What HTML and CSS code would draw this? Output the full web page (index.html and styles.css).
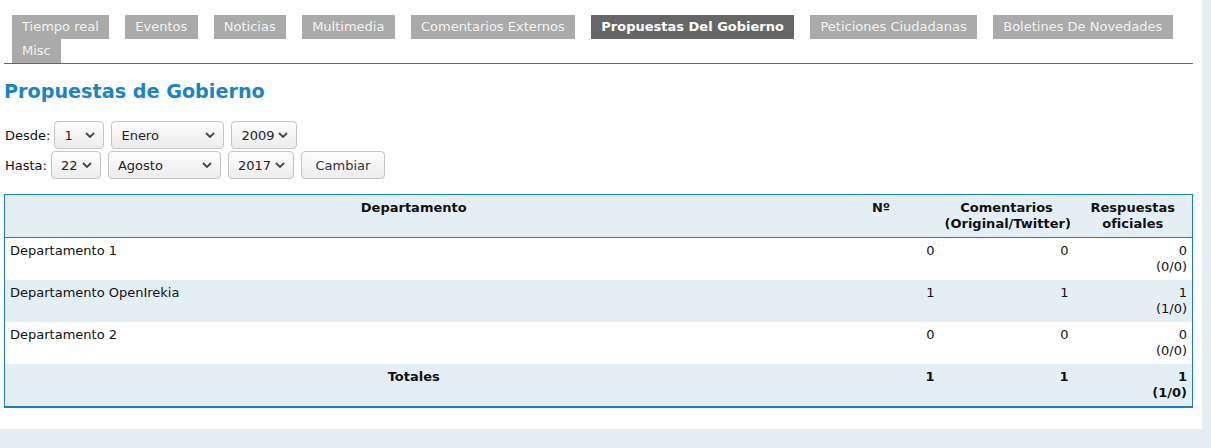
FILE: index.html
```html
<!DOCTYPE html>
<html lang="es">
<head>
<meta charset="utf-8">
<title>Propuestas de Gobierno</title>
<link rel="stylesheet" href="styles.css">
</head>
<body>
<div class="page">
  <ul class="tabs">
    <li class="tab">Tiempo real</li>
    <li class="tab">Eventos</li>
    <li class="tab">Noticias</li>
    <li class="tab">Multimedia</li>
    <li class="tab">Comentarios Externos</li>
    <li class="tab active">Propuestas Del Gobierno</li>
    <li class="tab">Peticiones Ciudadanas</li>
    <li class="tab">Boletines De Novedades</li>
    <li class="tab">Misc</li>
  </ul>

  <h1 class="title">Propuestas de Gobierno</h1>

  <form class="filter">
    <div class="frow">
      <span class="flabel">Desde:</span>
      <span class="sel w-day"><select><option>1</option></select><svg class="chev" width="10" height="6" viewBox="0 0 10 6"><path d="M1 1L5 5L9 1" fill="none" stroke="#444" stroke-width="1.8"/></svg></span>
      <span class="sel w-month"><select><option>Enero</option></select><svg class="chev" width="10" height="6" viewBox="0 0 10 6"><path d="M1 1L5 5L9 1" fill="none" stroke="#444" stroke-width="1.8"/></svg></span>
      <span class="sel w-year"><select><option>2009</option></select><svg class="chev" width="10" height="6" viewBox="0 0 10 6"><path d="M1 1L5 5L9 1" fill="none" stroke="#444" stroke-width="1.8"/></svg></span>
    </div>
    <div class="frow">
      <span class="flabel">Hasta:</span>
      <span class="sel w-day"><select><option>22</option></select><svg class="chev" width="10" height="6" viewBox="0 0 10 6"><path d="M1 1L5 5L9 1" fill="none" stroke="#444" stroke-width="1.8"/></svg></span>
      <span class="sel w-month"><select><option>Agosto</option></select><svg class="chev" width="10" height="6" viewBox="0 0 10 6"><path d="M1 1L5 5L9 1" fill="none" stroke="#444" stroke-width="1.8"/></svg></span>
      <span class="sel w-year"><select><option>2017</option></select><svg class="chev" width="10" height="6" viewBox="0 0 10 6"><path d="M1 1L5 5L9 1" fill="none" stroke="#444" stroke-width="1.8"/></svg></span>
      <button type="button" class="btn">Cambiar</button>
    </div>
  </form>

  <table class="stats">
    <colgroup>
      <col class="c-dept">
      <col class="c-num">
      <col class="c-com">
      <col class="c-resp">
    </colgroup>
    <thead>
      <tr>
        <th>Departamento</th>
        <th>Nº</th>
        <th>Comentarios<br>(Original/Twitter)</th>
        <th>Respuestas<br>oficiales</th>
      </tr>
    </thead>
    <tbody>
      <tr>
        <td>Departamento 1</td>
        <td class="n">0</td>
        <td class="n">0</td>
        <td class="n">0<br>(0/0)</td>
      </tr>
      <tr class="alt">
        <td>Departamento OpenIrekia</td>
        <td class="n">1</td>
        <td class="n">1</td>
        <td class="n">1<br>(1/0)</td>
      </tr>
      <tr>
        <td>Departamento 2</td>
        <td class="n">0</td>
        <td class="n">0</td>
        <td class="n">0<br>(0/0)</td>
      </tr>
      <tr class="alt total">
        <th>Totales</th>
        <td class="n">1</td>
        <td class="n">1</td>
        <td class="n">1<br>(1/0)</td>
      </tr>
    </tbody>
  </table>
</div>
</body>
</html>
```

FILE: styles.css
```css
html, body {
  margin: 0;
  padding: 0;
}
body {
  background: #e4eff5;
  font-family: "DejaVu Sans", Verdana, sans-serif;
  font-size: 13px;
  color: #111;
}
.page {
  width: 1189px;
  margin-right: 9px;
  background: #fff;
  padding: 15px 9px 21px 4px;
}

/* tabs */
.tabs {
  list-style: none;
  margin: 0;
  padding: 0 0 0 8px;
  display: flex;
  flex-wrap: wrap;
  border-bottom: 1px solid #666;
}
.tab {
  height: 24px;
  line-height: 24px;
  padding: 0 10.5px 0 10px;
  margin-right: 16px;
  background: #aaa;
  color: #f2f2f2;
  white-space: nowrap;
}
.tab.active {
  background: #666;
  color: #fff;
  font-weight: bold;
}

/* title */
.title {
  margin: 16px 0 0 0;
  font-size: 19.2px;
  line-height: 24px;
  font-weight: bold;
  color: #1a84c4;
}

/* filter form */
.filter {
  margin-top: 17px;
  display: flex;
  flex-direction: column;
  gap: 2px;
}
.frow {
  display: flex;
  align-items: center;
  gap: 7px;
}
.flabel {
  padding-left: 1px;
  margin-right: -3px;
}
.sel {
  position: relative;
  display: inline-block;
  height: 28px;
}
.sel select {
  -webkit-appearance: none;
  appearance: none;
  width: 100%;
  height: 28px;
  box-sizing: border-box;
  border: 1px solid #c4c4c4;
  border-radius: 4px;
  background: linear-gradient(#fdfdfd, #ececec);
  font-family: "DejaVu Sans", Verdana, sans-serif;
  font-size: 13px;
  color: #222;
  padding: 0 18px 0 9px;
  margin: 0;
}
.chev {
  position: absolute;
  right: 9px;
  top: 11px;
  pointer-events: none;
}
.w-day { width: 50px; }
.w-month { width: 113px; }
.w-year { width: 66px; }
.btn {
  width: 84px;
  height: 28px;
  box-sizing: border-box;
  border: 1px solid #c4c4c4;
  border-radius: 4px;
  background: linear-gradient(#fdfdfd, #ececec);
  font-family: "DejaVu Sans", Verdana, sans-serif;
  font-size: 13px;
  color: #333;
  padding: 0;
  margin: 0;
}

/* table */
.stats {
  margin-top: 15px;
  width: 1188px;
  table-layout: fixed;
  border-collapse: collapse;
  border: 1px solid #1a80bf;
  border-bottom-width: 2px;
}
.c-dept { width: 818px; }
.c-num { width: 117px; }
.c-com { width: 134px; }
.c-resp { width: 119px; }
.stats th,
.stats td {
  padding: 5px;
  line-height: 16px;
  vertical-align: top;
}
.stats th {
  text-align: center;
  font-weight: bold;
}
.stats td {
  text-align: left;
}
.stats td.n {
  text-align: right;
}
.stats thead tr {
  background: #e4eff5;
  border-bottom: 1px solid #1a80bf;
}
.stats tr.alt {
  background: #e4eff5;
}
.stats tr.total td {
  font-weight: bold;
}
```
